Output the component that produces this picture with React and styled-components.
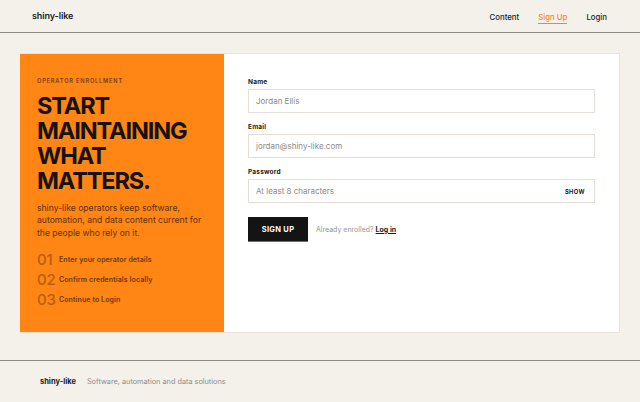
import React from "react";
import styled, { createGlobalStyle } from "styled-components";

const Global = createGlobalStyle`
  * { box-sizing: border-box; }
  html, body { margin: 0; padding: 0; background: #f4f1eb; }
  body { font-family: Inter, "Liberation Sans", sans-serif; color: #1a1a1a; }
`;

const Page = styled.div`
  width: 640px;
  min-height: 402px;
  display: flex;
  flex-direction: column;
  background: #f4f1eb;
`;

const Header = styled.header`
  height: 33px;
  display: flex;
  align-items: center;
  justify-content: space-between;
  padding: 0 33px 0 32px;
  border-bottom: 1px solid #8e8a84;
`;

const Brand = styled.div`
  font-size: 9px;
  font-weight: 600;
  letter-spacing: -0.1px;
  margin-top: -1px;
`;

const Nav = styled.nav`
  display: flex;
  gap: 19px;
  align-items: center;
  margin-top: 1px;
`;

const NavLink = styled.a`
  font-size: 7.8px;
  font-weight: 500;
  line-height: 10px;
  color: ${(p) => (p.$active ? "#ff8514" : "#1a1a1a")};
  text-decoration: none;
  padding: 2px 0 1px;
  border-bottom: 1.5px solid ${(p) => (p.$active ? "#ff8514" : "transparent")};
`;

const Main = styled.main`
  padding: 20px 20px 27px;
`;

const Card = styled.section`
  display: grid;
  grid-template-columns: 204px 1fr;
  background: #fff;
  border: 1px solid #e8e4dc;
  border-left: none;
  height: 280px;
`;

const Aside = styled.div`
  background: #ff8514;
  padding: 24px 17px 0;
  display: flex;
  flex-direction: column;
`;

const Eyebrow = styled.div`
  font-size: 5.6px;
  font-weight: 600;
  letter-spacing: 0.85px;
  color: #744010;
  text-transform: uppercase;
`;

const Headline = styled.h1`
  margin: 9px 0 0;
  font-size: 23.5px;
  line-height: 25px;
  font-weight: 700;
  letter-spacing: -1.1px;
  color: #161412;
`;

const Lead = styled.p`
  margin: 9px 0 0;
  font-size: 8.6px;
  line-height: 12.4px;
  color: #5e3308;
`;

const Steps = styled.ol`
  list-style: none;
  margin: 12px 0 0;
  padding: 0;
  display: flex;
  flex-direction: column;
  gap: 3px;
`;

const Step = styled.li`
  display: flex;
  align-items: center;
  gap: 6px;
  height: 17px;
`;

const StepNum = styled.span`
  font-size: 15px;
  font-weight: 500;
  color: #b95f0c;
  letter-spacing: -0.3px;
  width: 16px;
`;

const StepText = styled.span`
  font-size: 7px;
  font-weight: 600;
  color: #6b3a0a;
  letter-spacing: 0.1px;
`;

const Form = styled.form`
  padding: 24px 24px 0;
  display: flex;
  flex-direction: column;
`;

const Field = styled.div`
  display: flex;
  flex-direction: column;
  margin-bottom: 10px;
`;

const Label = styled.label`
  font-size: 6.5px;
  line-height: 8px;
  font-weight: 700;
  color: #1a1a1a;
  margin-bottom: 3px;
  letter-spacing: 0.2px;
`;

const InputWrap = styled.div`
  height: 24px;
  border: 1px solid #e3dfd8;
  display: flex;
  align-items: center;
  justify-content: space-between;
  padding: 0 9px 0 7px;
  background: #fff;
`;

const Placeholder = styled.span`
  font-size: 8px;
  color: #8d8a86;
`;

const Show = styled.span`
  font-size: 5.8px;
  font-weight: 700;
  letter-spacing: 0.4px;
  color: #1a1a1a;
`;

const Actions = styled.div`
  display: flex;
  align-items: center;
  gap: 8px;
  margin-top: 4px;
`;

const Button = styled.button`
  width: 60px;
  height: 24px;
  border: none;
  background: #141414;
  color: #fff;
  font-family: inherit;
  font-size: 7.5px;
  font-weight: 700;
  letter-spacing: 0.3px;
  box-shadow: 0 1px 0 #6e6e6e;
`;

const Muted = styled.span`
  font-size: 7px;
  color: #999591;
`;

const LoginLink = styled.a`
  font-weight: 700;
  color: #1a1a1a;
  text-decoration: underline;
`;

const Footer = styled.footer`
  border-top: 1px solid #8e8a84;
  padding: 0 40px;
  height: 42px;
  display: flex;
  align-items: center;
  gap: 11px;
`;

const FootBrand = styled.span`
  font-size: 7.5px;
  font-weight: 700;
`;

const FootText = styled.span`
  font-size: 7.3px;
  color: #8f8b85;
`;

export default function App() {
  return (
    <Page>
      <Global />
      <Header>
        <Brand>shiny-like</Brand>
        <Nav>
          <NavLink>Content</NavLink>
          <NavLink $active>Sign Up</NavLink>
          <NavLink>Login</NavLink>
        </Nav>
      </Header>
      <Main>
        <Card>
          <Aside>
            <Eyebrow>Operator Enrollment</Eyebrow>
            <Headline>
              START
              <br />
              MAINTAINING
              <br />
              WHAT
              <br />
              MATTERS.
            </Headline>
            <Lead>
              shiny-like operators keep software, automation, and data content
              current for the people who rely on it.
            </Lead>
            <Steps>
              <Step>
                <StepNum>01</StepNum>
                <StepText>Enter your operator details</StepText>
              </Step>
              <Step>
                <StepNum>02</StepNum>
                <StepText>Confirm credentials locally</StepText>
              </Step>
              <Step>
                <StepNum>03</StepNum>
                <StepText>Continue to Login</StepText>
              </Step>
            </Steps>
          </Aside>
          <Form>
            <Field>
              <Label>Name</Label>
              <InputWrap>
                <Placeholder>Jordan Ellis</Placeholder>
              </InputWrap>
            </Field>
            <Field>
              <Label>Email</Label>
              <InputWrap>
                <Placeholder>jordan@shiny-like.com</Placeholder>
              </InputWrap>
            </Field>
            <Field>
              <Label>Password</Label>
              <InputWrap>
                <Placeholder>At least 8 characters</Placeholder>
                <Show>SHOW</Show>
              </InputWrap>
            </Field>
            <Actions>
              <Button type="button">SIGN UP</Button>
              <Muted>
                Already enrolled? <LoginLink>Log in</LoginLink>
              </Muted>
            </Actions>
          </Form>
        </Card>
      </Main>
      <Footer>
        <FootBrand>shiny-like</FootBrand>
        <FootText>Software, automation and data solutions</FootText>
      </Footer>
    </Page>
  );
}
